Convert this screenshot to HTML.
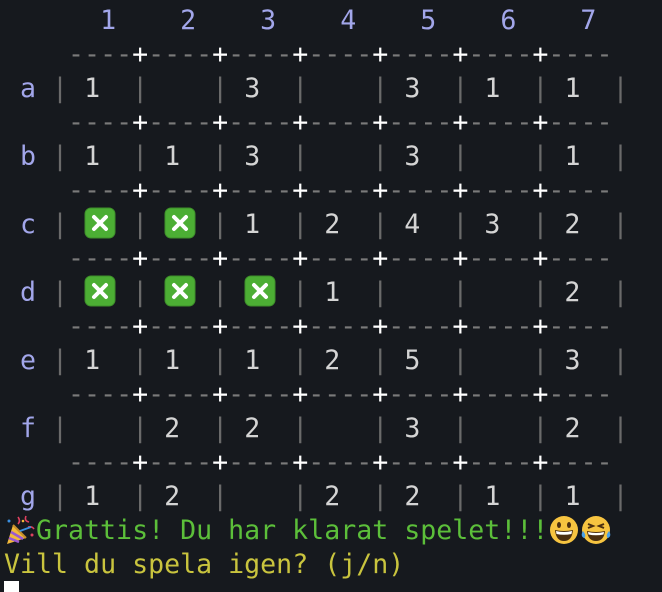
<!DOCTYPE html>
<html><head><meta charset="utf-8"><style>
html,body{margin:0;padding:0;background:#16191e;width:662px;height:592px;overflow:hidden}
#t{position:absolute;left:4px;top:4px;font-family:"DejaVu Sans Mono","Liberation Mono",monospace;font-size:26.6px;color:#d4d4d4}
.l{height:34px;line-height:34px;white-space:pre}
.h{color:#a2a6ea}.p{color:#6a6a6a}.d{color:#7a7a7a}.x{color:#ffffff}
.g{color:#5cbf3a}.y{color:#c9c43e}
.e{display:inline-block;width:32px;height:34px;vertical-align:top;position:relative}
.e svg{position:absolute;left:0;top:-1px}
#cur{position:absolute;left:4px;top:581px;width:15px;height:11px;background:#fff}
</style></head><body><div id="t"><div class="l h">      1    2    3    4    5    6    7</div><div class="l"><span class="d">    ----</span><span class="x">+</span><span class="d">----</span><span class="x">+</span><span class="d">----</span><span class="x">+</span><span class="d">----</span><span class="x">+</span><span class="d">----</span><span class="x">+</span><span class="d">----</span><span class="x">+</span><span class="d">----</span></div><div class="l"> <span class="h">a</span> <span class="p">|</span> 1  <span class="p">|</span>    <span class="p">|</span> 3  <span class="p">|</span>    <span class="p">|</span> 3  <span class="p">|</span> 1  <span class="p">|</span> 1  <span class="p">|</span></div><div class="l"><span class="d">    ----</span><span class="x">+</span><span class="d">----</span><span class="x">+</span><span class="d">----</span><span class="x">+</span><span class="d">----</span><span class="x">+</span><span class="d">----</span><span class="x">+</span><span class="d">----</span><span class="x">+</span><span class="d">----</span></div><div class="l"> <span class="h">b</span> <span class="p">|</span> 1  <span class="p">|</span> 1  <span class="p">|</span> 3  <span class="p">|</span>    <span class="p">|</span> 3  <span class="p">|</span>    <span class="p">|</span> 1  <span class="p">|</span></div><div class="l"><span class="d">    ----</span><span class="x">+</span><span class="d">----</span><span class="x">+</span><span class="d">----</span><span class="x">+</span><span class="d">----</span><span class="x">+</span><span class="d">----</span><span class="x">+</span><span class="d">----</span><span class="x">+</span><span class="d">----</span></div><div class="l"> <span class="h">c</span> <span class="p">|</span> <span class="e"><svg width="32" height="32" viewBox="0 0 32 32"><rect x="1" y="1" width="30" height="30" rx="6" fill="#4cae34" stroke="#3d8f2a"/><path d="M10 10L22 22M22 10L10 22" stroke="#fff" stroke-width="4" stroke-linecap="round"/></svg></span> <span class="p">|</span> <span class="e"><svg width="32" height="32" viewBox="0 0 32 32"><rect x="1" y="1" width="30" height="30" rx="6" fill="#4cae34" stroke="#3d8f2a"/><path d="M10 10L22 22M22 10L10 22" stroke="#fff" stroke-width="4" stroke-linecap="round"/></svg></span> <span class="p">|</span> 1  <span class="p">|</span> 2  <span class="p">|</span> 4  <span class="p">|</span> 3  <span class="p">|</span> 2  <span class="p">|</span></div><div class="l"><span class="d">    ----</span><span class="x">+</span><span class="d">----</span><span class="x">+</span><span class="d">----</span><span class="x">+</span><span class="d">----</span><span class="x">+</span><span class="d">----</span><span class="x">+</span><span class="d">----</span><span class="x">+</span><span class="d">----</span></div><div class="l"> <span class="h">d</span> <span class="p">|</span> <span class="e"><svg width="32" height="32" viewBox="0 0 32 32"><rect x="1" y="1" width="30" height="30" rx="6" fill="#4cae34" stroke="#3d8f2a"/><path d="M10 10L22 22M22 10L10 22" stroke="#fff" stroke-width="4" stroke-linecap="round"/></svg></span> <span class="p">|</span> <span class="e"><svg width="32" height="32" viewBox="0 0 32 32"><rect x="1" y="1" width="30" height="30" rx="6" fill="#4cae34" stroke="#3d8f2a"/><path d="M10 10L22 22M22 10L10 22" stroke="#fff" stroke-width="4" stroke-linecap="round"/></svg></span> <span class="p">|</span> <span class="e"><svg width="32" height="32" viewBox="0 0 32 32"><rect x="1" y="1" width="30" height="30" rx="6" fill="#4cae34" stroke="#3d8f2a"/><path d="M10 10L22 22M22 10L10 22" stroke="#fff" stroke-width="4" stroke-linecap="round"/></svg></span> <span class="p">|</span> 1  <span class="p">|</span>    <span class="p">|</span>    <span class="p">|</span> 2  <span class="p">|</span></div><div class="l"><span class="d">    ----</span><span class="x">+</span><span class="d">----</span><span class="x">+</span><span class="d">----</span><span class="x">+</span><span class="d">----</span><span class="x">+</span><span class="d">----</span><span class="x">+</span><span class="d">----</span><span class="x">+</span><span class="d">----</span></div><div class="l"> <span class="h">e</span> <span class="p">|</span> 1  <span class="p">|</span> 1  <span class="p">|</span> 1  <span class="p">|</span> 2  <span class="p">|</span> 5  <span class="p">|</span>    <span class="p">|</span> 3  <span class="p">|</span></div><div class="l"><span class="d">    ----</span><span class="x">+</span><span class="d">----</span><span class="x">+</span><span class="d">----</span><span class="x">+</span><span class="d">----</span><span class="x">+</span><span class="d">----</span><span class="x">+</span><span class="d">----</span><span class="x">+</span><span class="d">----</span></div><div class="l"> <span class="h">f</span> <span class="p">|</span>    <span class="p">|</span> 2  <span class="p">|</span> 2  <span class="p">|</span>    <span class="p">|</span> 3  <span class="p">|</span>    <span class="p">|</span> 2  <span class="p">|</span></div><div class="l"><span class="d">    ----</span><span class="x">+</span><span class="d">----</span><span class="x">+</span><span class="d">----</span><span class="x">+</span><span class="d">----</span><span class="x">+</span><span class="d">----</span><span class="x">+</span><span class="d">----</span><span class="x">+</span><span class="d">----</span></div><div class="l"> <span class="h">g</span> <span class="p">|</span> 1  <span class="p">|</span> 2  <span class="p">|</span>    <span class="p">|</span> 2  <span class="p">|</span> 2  <span class="p">|</span> 1  <span class="p">|</span> 1  <span class="p">|</span></div><div class="l g"><span class="e"><svg width="32" height="32" viewBox="0 0 32 32"><path d="M3 31L9 12L22 25Z" fill="#f2b93a"/><path d="M5 25L15 29M7 19L19 26" stroke="#9b59d0" stroke-width="2.5"/><path d="M9 12L22 25" stroke="#c8902a" stroke-width="2"/><path d="M14 4q3 4 0 7M22 3q-2 5 3 6M24 14q4-1 6 2" stroke="#e04060" stroke-width="1.6" fill="none"/><path d="M16 18L27 14" stroke="#3a8fe0" stroke-width="1.8"/><circle cx="5" cy="8" r="1.5" fill="#3a8fe0"/><circle cx="28" cy="22" r="1.5" fill="#e04060"/><circle cx="19" cy="8" r="1.3" fill="#f2b93a"/></svg></span>Grattis! Du har klarat spelet!!!<span class="e"><svg width="32" height="32" viewBox="0 0 32 32"><circle cx="16" cy="17" r="14" fill="#f7c440"/><ellipse cx="11" cy="12" rx="2" ry="3" fill="#4a2e10"/><ellipse cx="21" cy="12" rx="2" ry="3" fill="#4a2e10"/><path d="M7 17Q16 19 25 17Q24 28 16 28Q8 28 7 17Z" fill="#4a2e10"/><path d="M8 18Q16 20 24 18L23.5 21Q16 22.5 8.5 21Z" fill="#fff"/></svg></span><span class="e"><svg width="32" height="32" viewBox="0 0 32 32"><circle cx="16" cy="17" r="14" fill="#f7c440"/><path d="M8 11L13 13L8 15M24 11L19 13L24 15" stroke="#4a2e10" stroke-width="2" fill="none"/><path d="M7 18Q16 20 25 18Q24 28 16 28Q8 28 7 18Z" fill="#4a2e10"/><path d="M8 19Q16 21 24 19L23.5 21.5Q16 23 8.5 21.5Z" fill="#fff"/><path d="M3 18q-3 5 1 7q3-2-1-7ZM29 18q3 5-1 7q-3-2 1-7Z" fill="#4aa0e8"/></svg></span></div><div class="l y">Vill du spela igen? (j/n)</div></div><div id="cur"></div></body></html>
